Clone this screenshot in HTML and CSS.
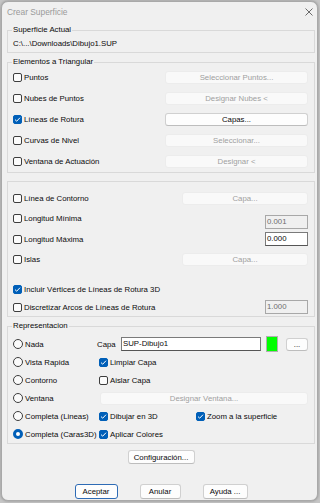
FILE: index.html
```html
<!DOCTYPE html>
<html lang="es">
<head>
<meta charset="utf-8">
<title>Crear Superficie</title>
<link rel="stylesheet" href="styles.css">
</head>
<body>
<div class="dialog">
  <div class="titlebar">
    <span class="title">Crear Superficie</span>
    <svg class="close" width="8" height="8" viewBox="0 0 8 8"><path d="M0.5 0.5 L7.5 7.5 M7.5 0.5 L0.5 7.5" stroke="#5a5a5a" stroke-width="0.9" fill="none"/></svg>
  </div>
  <div class="content">
    <fieldset class="group g1">
      <legend>Superficie Actual</legend>
      <div class="path">C:\...\Downloads\Dibujo1.SUP</div>
    </fieldset>

    <fieldset class="group g2">
      <legend>Elementos a Triangular</legend>
      <div class="row"><span class="chk"><span class="box"></span>Puntos</span><button class="btn w143" disabled>Seleccionar Puntos...</button></div>
      <div class="row"><span class="chk"><span class="box"></span>Nubes de Puntos</span><button class="btn w143" disabled>Designar Nubes &lt;</button></div>
      <div class="row"><span class="chk"><span class="box on"><svg width="7" height="7" viewBox="0 0 7 7"><path d="M1 3.6 L2.7 5.2 L6 1.7" stroke="#fff" stroke-width="1" fill="none"/></svg></span>Líneas de Rotura</span><button class="btn w143 en">Capas...</button></div>
      <div class="row"><span class="chk"><span class="box"></span>Curvas de Nivel</span><button class="btn w143" disabled>Seleccionar...</button></div>
      <div class="row"><span class="chk"><span class="box"></span>Ventana de Actuación</span><button class="btn w143" disabled>Designar &lt;</button></div>
    </fieldset>

    <fieldset class="group g3">
      <div class="row"><span class="chk"><span class="box"></span>Línea de Contorno</span><button class="btn w126" disabled>Capa...</button></div>
      <div class="row"><span class="chk"><span class="box"></span>Longitud Mínima</span><span class="field off low">0.001</span></div>
      <div class="row"><span class="chk"><span class="box"></span>Longitud Máxima</span><span class="field">0.000</span></div>
      <div class="row"><span class="chk"><span class="box"></span>Islas</span><button class="btn w126" disabled>Capa...</button></div>
      <div class="spacer"></div>
      <div class="row short"><span class="chk"><span class="box on"><svg width="7" height="7" viewBox="0 0 7 7"><path d="M1 3.6 L2.7 5.2 L6 1.7" stroke="#fff" stroke-width="1" fill="none"/></svg></span>Incluir Vértices de Líneas de Rotura 3D</span></div>
      <div class="row short"><span class="chk"><span class="box"></span>Discretizar Arcos de Líneas de Rotura</span><span class="field off">1.000</span></div>
    </fieldset>

    <fieldset class="group g4">
      <legend>Representacion</legend>
      <div class="rep">
        <span class="radio"><span class="dot"></span>Nada</span>
        <div class="capa-row"><span class="capa-label">Capa</span><span class="field wide">SUP-Dibujo1</span><span class="swatch"></span><button class="btn w22 en">...</button></div>

        <span class="radio"><span class="dot"></span>Vista Rapida</span>
        <div class="opt"><span class="chk"><span class="box on"><svg width="7" height="7" viewBox="0 0 7 7"><path d="M1 3.6 L2.7 5.2 L6 1.7" stroke="#fff" stroke-width="1" fill="none"/></svg></span>Limpiar Capa</span></div>

        <span class="radio"><span class="dot"></span>Contorno</span>
        <div class="opt"><span class="chk"><span class="box"></span>Aislar Capa</span></div>

        <span class="radio"><span class="dot"></span>Ventana</span>
        <div class="opt btnopt"><button class="btn grow" disabled>Designar Ventana...</button></div>

        <span class="radio"><span class="dot"></span>Completa (Lineas)</span>
        <div class="opt pair"><span class="chk c1"><span class="box on"><svg width="7" height="7" viewBox="0 0 7 7"><path d="M1 3.6 L2.7 5.2 L6 1.7" stroke="#fff" stroke-width="1" fill="none"/></svg></span>Dibujar en 3D</span><span class="chk"><span class="box on"><svg width="7" height="7" viewBox="0 0 7 7"><path d="M1 3.6 L2.7 5.2 L6 1.7" stroke="#fff" stroke-width="1" fill="none"/></svg></span>Zoom a la superficie</span></div>

        <span class="radio"><span class="dot on"></span>Completa (Caras3D)</span>
        <div class="opt"><span class="chk"><span class="box on"><svg width="7" height="7" viewBox="0 0 7 7"><path d="M1 3.6 L2.7 5.2 L6 1.7" stroke="#fff" stroke-width="1" fill="none"/></svg></span>Aplicar Colores</span></div>
      </div>
    </fieldset>

    <div class="config-row"><button class="btn en cfg">Configuración...</button></div>

    <div class="footer">
      <button class="btn en fb default w43">Aceptar</button>
      <button class="btn en fb w41">Anular</button>
      <button class="btn en fb w45">Ayuda ...</button>
    </div>
  </div>
</div>
</body>
</html>
```

FILE: styles.css
```css
* { box-sizing: border-box; }
html, body { margin: 0; padding: 0; }
body {
  width: 320px;
  height: 503px;
  overflow: hidden;
  background: #c6c6c6;
  font-family: "Liberation Sans", Arial, sans-serif;
  font-size: 7.8px;
  color: #0a0a0a;
}
.dialog {
  margin: 1px 0 0 1px;
  width: 317px;
  height: 500px;
  background: #f0f0f0;
  border: 1px solid #a9a9a9;
  border-radius: 7px;
  box-shadow: 0 0 3px rgba(0,0,0,0.3);
  display: flex;
  flex-direction: column;
}
.titlebar {
  height: 23px;
  flex: none;
  display: flex;
  align-items: center;
  justify-content: space-between;
  padding: 0 4px 3px 5px;
}
.title { font-size: 8.4px; color: #9a9a9a; }
.close { display: block; }
.content { padding: 0 2px 0 5px; display: flex; flex-direction: column; }

.group {
  margin: 0;
  width: 308px;
  min-width: 0;
  border: 1px solid #d9d9d9;
  padding: 0 6px 0 5px;
}
.group legend {
  padding: 0 1px;
  margin-left: -1px;
  height: 10px;
  line-height: 10px;
  color: #0a0a0a;
}
.path { height: 17px; line-height: 17px; white-space: nowrap; }

.g2 { margin-top: 4px; }
.row { display: flex; align-items: center; justify-content: space-between; }
.g2 .row { height: 21px; }

.g3 { margin-top: 8px; padding-top: 6px; }
.g3 .row { height: 20.5px; }
.g3 .row.short { height: 18px; }
.g3 .spacer { height: 10px; }

.g4 { margin-top: 4px; padding-top: 4px; }

.chk { display: flex; align-items: center; gap: 2px; white-space: nowrap; }
.box {
  width: 9px; height: 9px; flex: none;
  border: 1px solid #3d3d3d;
  border-radius: 2px;
  background: #fbfbfb;
  display: flex; align-items: center; justify-content: center;
}
.box.on { background: #005fb8; border-color: #005fb8; }
.box svg { display: block; }

.radio { display: flex; align-items: center; gap: 2px; white-space: nowrap; }
.dot {
  width: 10px; height: 10px; flex: none;
  border: 1px solid #3d3d3d;
  border-radius: 50%;
  background: #fbfbfb;
}
.dot.on { border: 3px solid #005fb8; background: #fff; }

.btn {
  font: inherit;
  height: 13px;
  padding: 0;
  margin: 0;
  border: 1px solid #ececec;
  border-radius: 3px;
  background: #f9f9f9;
  color: #a0a0a0;
  display: flex; align-items: center; justify-content: center;
  white-space: nowrap;
}
.btn.en { background: #fdfdfd; border-color: #d0d0d0; border-bottom-color: #bdbdbd; color: #0a0a0a; }
.w143 { width: 143px; }
.w126 { width: 126px; }
.w22 { width: 22px; }
.w43 { width: 43px; }
.w41 { width: 41px; }
.w45 { width: 45px; }
.grow { flex: 1; }

.field {
  width: 43px; height: 14px;
  border: 1px solid #7a7a7a;
  border-bottom-color: #555;
  background: #fff;
  color: #0a0a0a;
  padding: 0 1px;
  line-height: 12px;
  white-space: nowrap;
}
.field.off { background: #f0f0f0; border-color: #a8a8a8; color: #6d6d6d; }
.field.low { margin-top: 6px; }
.field.wide { width: 140px; margin-left: 5px; }

.rep {
  display: grid;
  grid-template-columns: 84px 1fr;
  grid-auto-rows: 18px;
  align-items: center;
}
.capa-row { display: flex; align-items: center; }
.capa-label { width: 19px; }
.swatch { width: 12px; height: 16px; margin-left: 5px; background: #00ff00; border: 1px solid #b0b0b0; }
.capa-row .btn { margin-left: 8px; }
.opt { display: flex; align-items: center; padding-left: 2px; }
.btnopt { padding-left: 3px; }
.pair .c1 { width: 97px; }

.config-row { display: flex; justify-content: center; margin-top: 6px; }
.cfg { width: 67px; height: 14px; }
.footer { display: flex; justify-content: center; gap: 22px; margin-top: 20px; }
.fb { height: 15px; }
.btn.default { border-color: #2e6bb5; }
```
